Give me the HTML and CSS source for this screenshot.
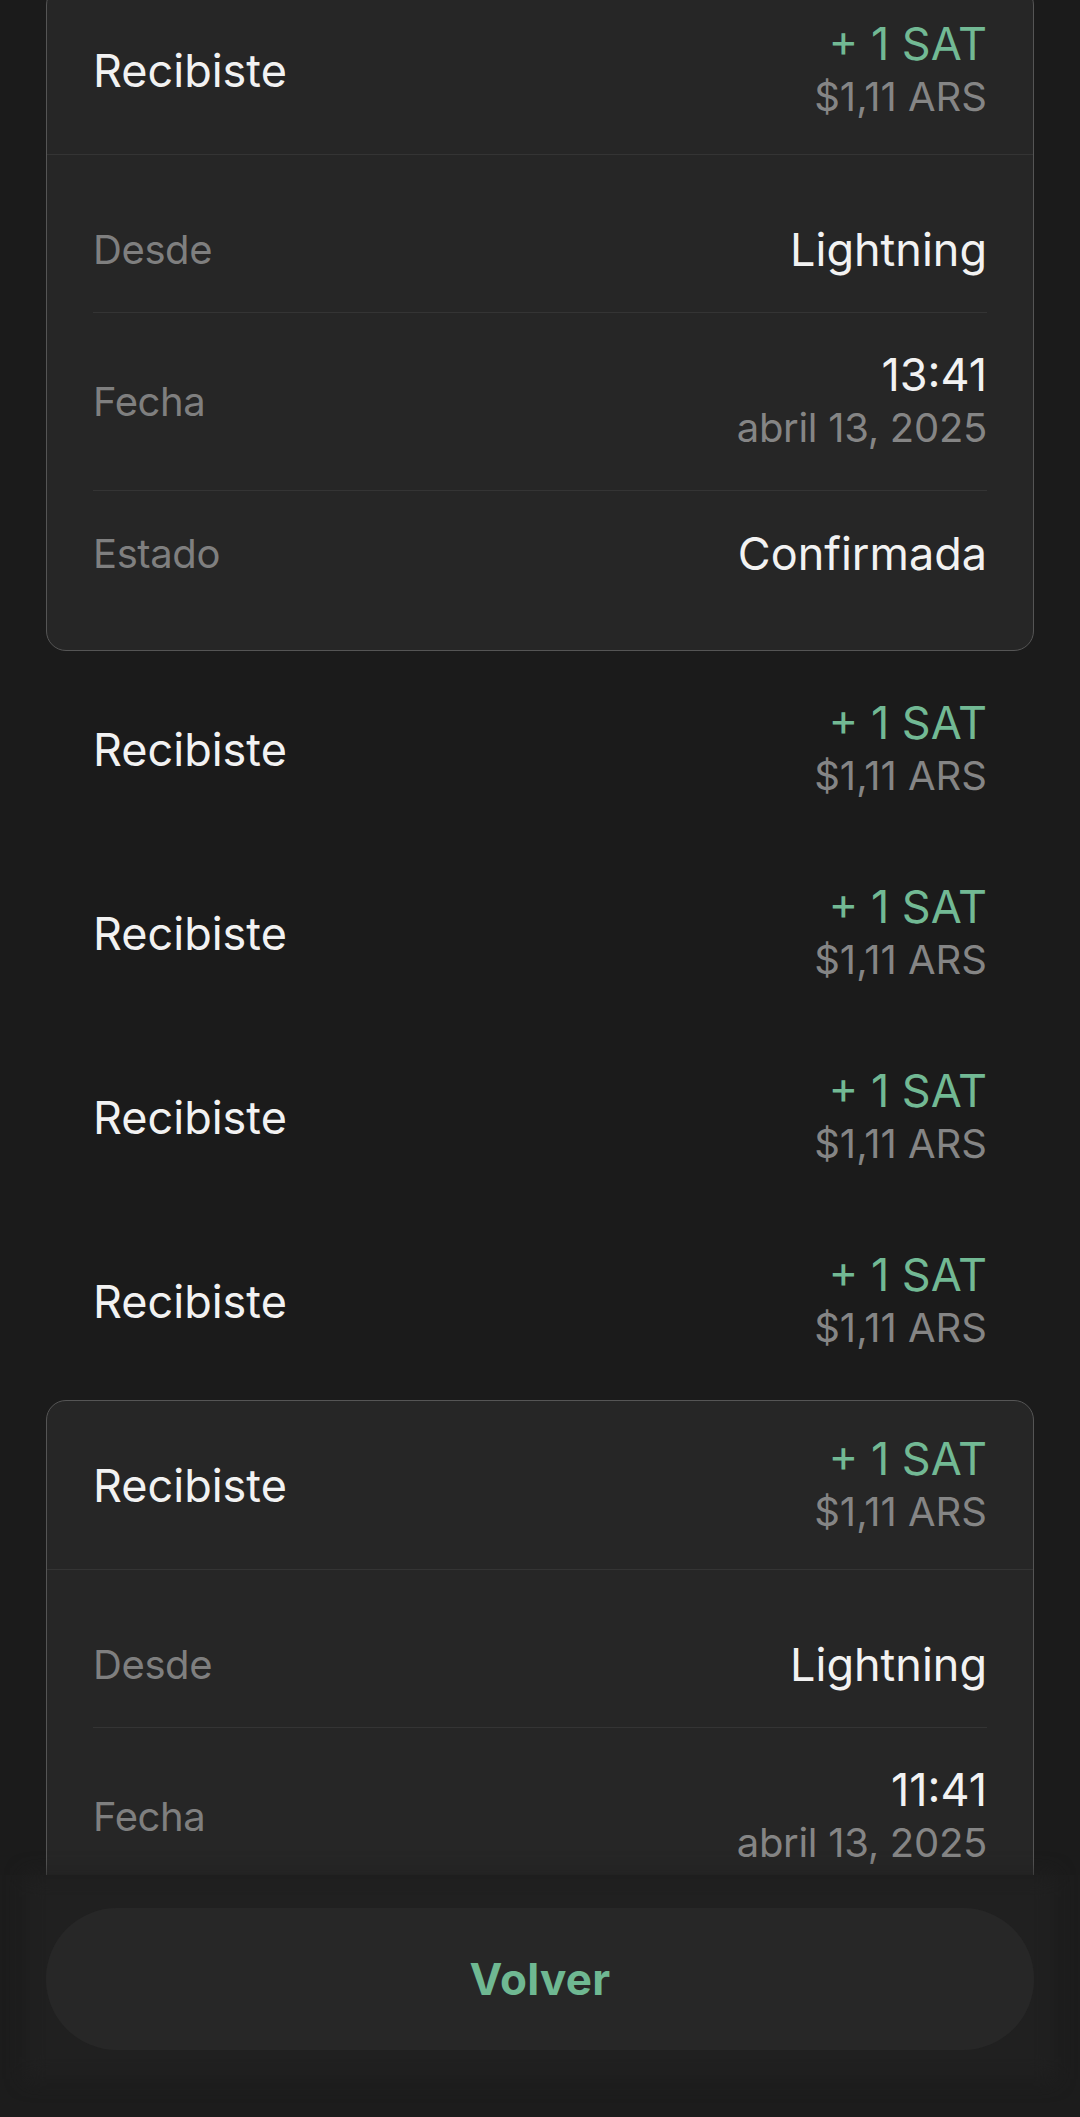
FILE: index.html
```html
<!DOCTYPE html>
<html lang="es">
<head>
    <meta charset="UTF-8">
    <meta name="viewport" content="width=device-width, initial-scale=1.0">
    <title>Movimientos</title>
    <link rel="stylesheet" href="styles.css">
</head>
<body>
<div class="screen">
    <div class="list">
        <div class="tx open">
            <div class="tx-head">
                <div class="tx-title">Recibiste</div>
                <div class="tx-amount">
                    <div class="sats">+ 1 SAT</div>
                    <div class="fiat">$1,11 ARS</div>
                </div>
            </div>
            <div class="details">
                <div class="detail-row">
                    <div class="label">Desde</div>
                    <div class="value">Lightning</div>
                </div>
                <div class="detail-row">
                    <div class="label">Fecha</div>
                    <div class="value stacked">
                        <div class="time">13:41</div>
                        <div class="date">abril 13, 2025</div>
                    </div>
                </div>
                <div class="detail-row">
                    <div class="label">Estado</div>
                    <div class="value">Confirmada</div>
                </div>
            </div>
        </div>

        <div class="tx">
            <div class="tx-head">
                <div class="tx-title">Recibiste</div>
                <div class="tx-amount">
                    <div class="sats">+ 1 SAT</div>
                    <div class="fiat">$1,11 ARS</div>
                </div>
            </div>
        </div>
        <div class="tx">
            <div class="tx-head">
                <div class="tx-title">Recibiste</div>
                <div class="tx-amount">
                    <div class="sats">+ 1 SAT</div>
                    <div class="fiat">$1,11 ARS</div>
                </div>
            </div>
        </div>
        <div class="tx">
            <div class="tx-head">
                <div class="tx-title">Recibiste</div>
                <div class="tx-amount">
                    <div class="sats">+ 1 SAT</div>
                    <div class="fiat">$1,11 ARS</div>
                </div>
            </div>
        </div>
        <div class="tx">
            <div class="tx-head">
                <div class="tx-title">Recibiste</div>
                <div class="tx-amount">
                    <div class="sats">+ 1 SAT</div>
                    <div class="fiat">$1,11 ARS</div>
                </div>
            </div>
        </div>

        <div class="tx open">
            <div class="tx-head">
                <div class="tx-title">Recibiste</div>
                <div class="tx-amount">
                    <div class="sats">+ 1 SAT</div>
                    <div class="fiat">$1,11 ARS</div>
                </div>
            </div>
            <div class="details">
                <div class="detail-row">
                    <div class="label">Desde</div>
                    <div class="value">Lightning</div>
                </div>
                <div class="detail-row">
                    <div class="label">Fecha</div>
                    <div class="value stacked">
                        <div class="time">11:41</div>
                        <div class="date">abril 13, 2025</div>
                    </div>
                </div>
                <div class="detail-row">
                    <div class="label">Estado</div>
                    <div class="value">Confirmada</div>
                </div>
            </div>
        </div>
    </div>

    <div class="bottom-bar">
        <button class="back-btn">Volver</button>
    </div>
</div>
</body>
</html>
```

FILE: styles.css
```css
html, body {
    margin: 0;
    height: 100%;
}
body {
    background-color: #1b1b1b;
    font-family: Inter, "Noto Sans", sans-serif;
    color: #f2f2f2;
}
.screen {
    position: relative;
    height: 100vh;
    overflow: hidden;
}
.list {
    display: flex;
    flex-direction: column;
    gap: 13px;
    margin-top: -15px;
    padding: 0 46px;
}
.tx {
    border: 1px solid transparent;
    border-radius: 20px;
}
.tx.open {
    background-color: #262626;
    border-color: #555;
}
.tx-head {
    height: 168px;
    display: flex;
    justify-content: space-between;
    align-items: center;
    padding: 0 46px;
    border-bottom: 1px solid transparent;
}
.tx.open .tx-head {
    border-bottom-color: #343434;
}
.tx-title {
    font-size: 45px;
    line-height: 53px;
}
.tx-amount {
    text-align: right;
}
.sats {
    font-size: 45px;
    line-height: 53px;
    color: #72b994;
}
.fiat {
    font-size: 40px;
    line-height: 53px;
    color: #858585;
}
.details {
    padding: 32px 46px 34px;
}
.detail-row {
    display: flex;
    justify-content: space-between;
    align-items: center;
    padding: 36px 0;
    border-bottom: 1px solid #343434;
}
.detail-row:last-child {
    border-bottom: none;
}
.label {
    font-size: 40px;
    line-height: 53px;
    color: #7f7f7f;
    letter-spacing: -0.4px;
}
.value {
    font-size: 45px;
    line-height: 53px;
    text-align: right;
}
.time {
    line-height: 52px;
}
.date {
    font-size: 40px;
    line-height: 53px;
    color: #858585;
    letter-spacing: -0.3px;
}
.bottom-bar {
    position: absolute;
    left: 0;
    right: 0;
    bottom: 0;
    height: 242px;
    background-color: #1c1c1c;
    padding: 33px 46px 0;
    box-sizing: border-box;
}
.bottom-bar::before {
    content: '';
    position: absolute;
    left: 26px;
    right: 26px;
    top: 0;
    bottom: 38px;
    background-color: #202020;
    filter: blur(10px);
}
.back-btn {
    position: relative;
    display: block;
    width: 100%;
    height: 142px;
    border: none;
    border-radius: 71px;
    background-color: #272727;
    color: #6fb892;
    font-family: Inter, "Noto Sans", sans-serif;
    font-size: 44px;
    font-weight: 700;
    letter-spacing: 0.3px;
}
```
